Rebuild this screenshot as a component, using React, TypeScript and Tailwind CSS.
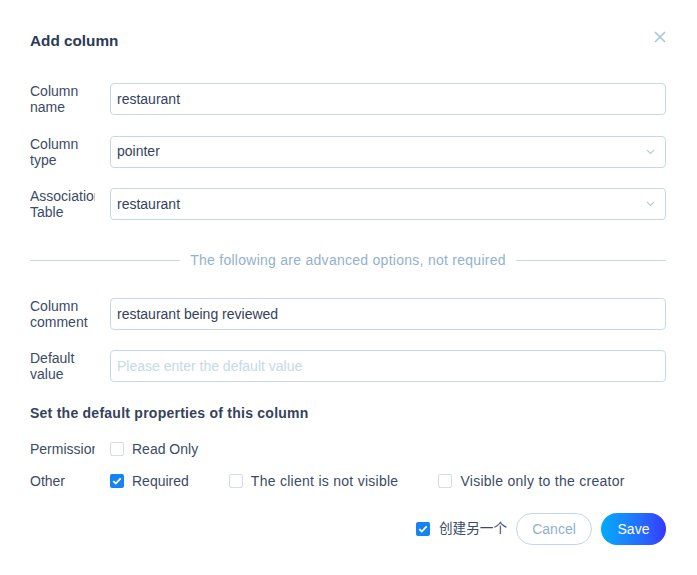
import React from 'react'

const font = { fontFamily: '"Liberation Sans", "Noto Sans CJK SC", Arial, sans-serif' }

function Chevron() {
  return (
    <svg width="9" height="6" viewBox="0 0 9 6" className="shrink-0">
      <path d="M1 1l3.5 3.5L8 1" fill="none" stroke="#b3cce3" strokeWidth="1.1" />
    </svg>
  )
}

function Check({ checked }: { checked?: boolean }) {
  if (checked) {
    return (
      <span className="flex h-[14px] w-[14px] shrink-0 items-center justify-center rounded-[2px] bg-[#1583f0]">
        <svg width="10" height="8" viewBox="0 0 10 8">
          <path d="M1.3 4.1l2.5 2.4L8.7 1.4" fill="none" stroke="#fff" strokeWidth="1.8" />
        </svg>
      </span>
    )
  }
  return <span className="h-[14px] w-[14px] shrink-0 rounded-[2px] border border-[#d3dbe3] bg-white" />
}

function Field({ label, children }: { label: string; children: React.ReactNode }) {
  return (
    <div className="flex items-center">
      <div className="w-[80px] shrink-0">
        <div className="w-[65px] overflow-hidden text-[14px] leading-[16px] text-[#3b4b68]">{label}</div>
      </div>
      {children}
    </div>
  )
}

function Input({ value, placeholder, select }: { value?: string; placeholder?: string; select?: boolean }) {
  return (
    <div className="flex h-[32px] flex-1 items-center justify-between rounded-[4px] border border-[#c4d8ea] bg-white pl-[6px] pr-[10px] text-[14px]">
      {value ? (
        <span className="text-[#34425e]">{value}</span>
      ) : (
        <span className="text-[#c6d9ea]">{placeholder}</span>
      )}
      {select && <Chevron />}
    </div>
  )
}

function Option({ label, checked, wide }: { label: string; checked?: boolean; wide?: boolean }) {
  return (
    <div className="flex items-center gap-[8px]">
      <Check checked={checked} />
      <span className={wide ? 'text-[14px] leading-[20px] tracking-[0.27px] text-[#3b4b68]' : 'text-[14px] leading-[20px] text-[#3b4b68]'}>
        {label}
      </span>
    </div>
  )
}

export default function App() {
  return (
    <div className="h-[575px] w-[697px] bg-white pl-[30px] pr-[31px] pt-[29px]" style={font}>
      <div className="flex h-[24px] items-center justify-between">
        <h2 className="text-[15.3px] font-bold leading-[24px] text-[#2b3a55]">Add column</h2>
        <svg width="12" height="12" viewBox="0 0 12 12" className="-mr-[0px] -mt-[9px]">
          <path d="M1 1l10 10M11 1L1 11" stroke="#a7c5e4" strokeWidth="1.6" />
        </svg>
      </div>

      <div className="mt-[30px] flex flex-col gap-[20.5px]">
        <Field label="Column name">
          <Input value="restaurant" />
        </Field>
        <Field label="Column type">
          <Input value="pointer" select />
        </Field>
        <Field label="Association Table">
          <Input value="restaurant" select />
        </Field>
      </div>

      <div className="mt-[30px] flex h-[20px] items-center gap-[10px]">
        <div className="h-px flex-1 bg-[#c4d8ea]" />
        <span className="text-[14px] leading-[20px] tracking-[0.27px] text-[#93b1cf]">
          The following are advanced options, not required
        </span>
        <div className="h-px flex-1 bg-[#c4d8ea]" />
      </div>

      <div className="mt-[28px] flex flex-col gap-[20px]">
        <Field label="Column comment">
          <Input value="restaurant being reviewed" />
        </Field>
        <Field label="Default value">
          <Input placeholder="Please enter the default value" />
        </Field>
      </div>

      <h3 className="mt-[21px] text-[14px] font-bold leading-[20px] tracking-[0.25px] text-[#34425e]">
        Set the default properties of this column
      </h3>

      <div className="mt-[16px] flex items-center">
        <div className="w-[80px] shrink-0">
          <div className="w-[65px] overflow-hidden whitespace-nowrap text-[14px] leading-[20px] text-[#3b4b68]">Permission</div>
        </div>
        <Option label="Read Only" />
      </div>
      <div className="mt-[12px] flex items-center">
        <div className="w-[80px] shrink-0 text-[14px] leading-[20px] text-[#3b4b68]">Other</div>
        <div className="flex items-center gap-[40px]">
          <Option label="Required" checked />
          <Option label="The client is not visible" wide />
          <Option label="Visible only to the creator" wide />
        </div>
      </div>

      <div className="mt-[22px] flex items-center justify-end gap-[9px]">
        <div className="flex items-center gap-[9px]">
          <Check checked />
          <span className="text-[13.6px] text-[#3b4b68]">创建另一个</span>
        </div>
        <button className="h-[32px] w-[76px] rounded-full border border-[#c4d8ea] bg-white text-[14px] text-[#8fb0cf]">Cancel</button>
        <button className="h-[32px] w-[65px] rounded-full bg-gradient-to-r from-[#00aaff] to-[#3535ff] text-[14px] text-white">Save</button>
      </div>
    </div>
  )
}
